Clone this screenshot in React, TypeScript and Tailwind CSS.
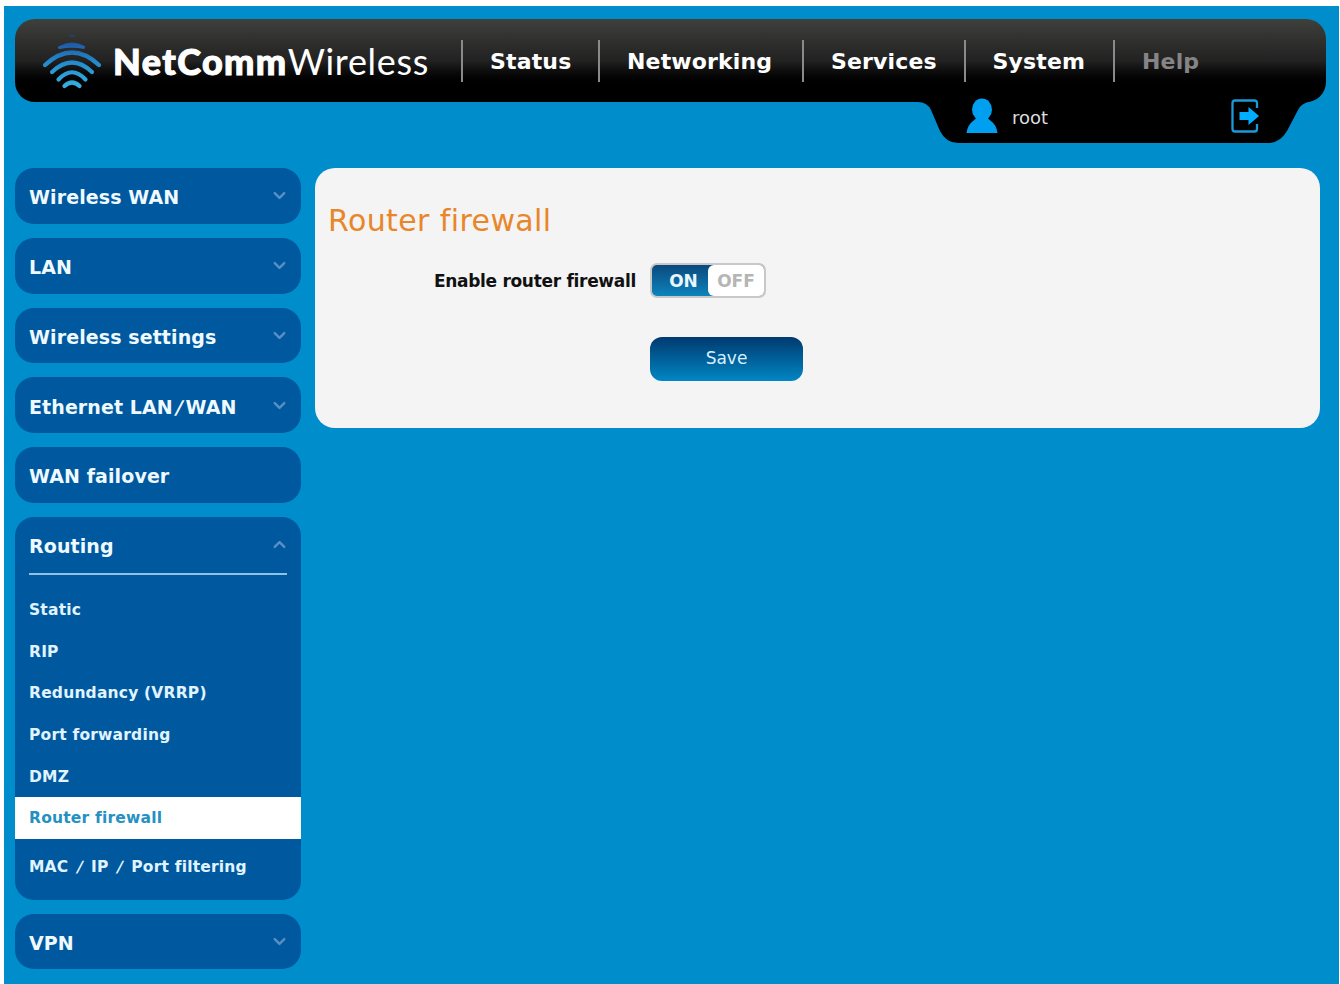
import { useState } from 'react';
import { ChevronDown, ChevronUp } from 'lucide-react';

const topNav = [
  { label: 'Status', width: 'w-[137px]' },
  { label: 'Networking', width: 'w-[204px]' },
  { label: 'Services', width: 'w-[161.5px]' },
  { label: 'System', width: 'w-[149.5px]' },
  { label: 'Help', width: 'w-[130px]', muted: true },
];

const menu = [
  { label: 'Wireless WAN', items: [''] },
  { label: 'LAN', items: [''] },
  { label: 'Wireless settings', items: [''] },
  { label: 'Ethernet LAN/WAN', items: [''] },
  { label: 'WAN failover', items: [] },
  {
    label: 'Routing',
    items: ['Static', 'RIP', 'Redundancy (VRRP)', 'Port forwarding', 'DMZ', 'Router firewall', 'MAC / IP / Port filtering'],
  },
  { label: 'VPN', items: [''] },
];

// slashes are drawn wider and lighter than the words around them
function MenuText({ text }: { text: string }) {
  return (
    <span className="whitespace-pre">
      {text.split(/(\/)/).map((part, i) => (part === '/' ? <span key={i} className="mx-[2.8px] inline-block -skew-x-12">/</span> : part))}
    </span>
  );
}

function LogoMark() {
  return (
    <svg width="60" height="58" viewBox="0 0 60 58" fill="none" strokeWidth="4.2" strokeLinecap="round" className="shrink-0">
      <defs>
        <linearGradient id="mark" x1="0" y1="0" x2="0" y2="58" gradientUnits="userSpaceOnUse">
          <stop offset="0" stopColor="#1d3f78" />
          <stop offset="0.25" stopColor="#2160ac" />
          <stop offset="0.5" stopColor="#2389cb" />
          <stop offset="1" stopColor="#38b4e4" />
        </linearGradient>
      </defs>
      <g stroke="url(#mark)">
        <path d="M28.500 4Q30 2.500 31.500 4" strokeWidth="2.500" opacity="0.5" />
        <path d="M17.500 15.500Q30 8.500 42.500 15.500Q30 13 17.500 15.500" strokeWidth="3" fill="#2160ac" />
        <path d="M3 33Q30 8 57 33" />
        <path d="M10 40Q30 21 50 40" />
        <path d="M16.500 47.500Q30 33 43.500 47.500" />
        <path d="M22.500 54Q30 47 37.500 54" />
      </g>
    </svg>
  );
}

function Header() {
  return (
    <header className="relative h-[83px] rounded-[20px] bg-linear-to-b from-[#3f3f3c] via-[#222] via-50% to-black to-85%">
      <div className="flex h-full items-center">
        <div className="flex w-[446px] items-center pl-[27px]">
          <LogoMark />
          <div className="ml-[11px] whitespace-nowrap font-['Lato',sans-serif] text-[36px] leading-none text-white">
            <span className="font-black tracking-[1.4px] [-webkit-text-stroke:1px_white]">NetComm</span>
            <span className="font-normal tracking-[0.7px]">Wireless</span>
          </div>
        </div>
        <nav className="flex">
          {topNav.map(n => (
            <a key={n.label} href="#" className={`${n.width} flex h-[42px] items-center border-l-2 border-[#8a8a8a] pl-[27px] pt-[2px] text-[22px] font-bold tracking-[0.15px] ${n.muted ? 'text-[#858585]' : 'text-white'}`}>
              {n.label}
            </a>
          ))}
        </nav>
      </div>
      {/* user tab hanging under the bar */}
      <div className="absolute right-[16px] top-[82px] h-[43px] w-[392px]">
        <svg width="392" height="43" viewBox="0 0 392 43" className="absolute inset-0">
          <path d="M0 0H396Q384 1 380 9L369 30Q362 42 350 42H40Q28 42 22 30L13 9Q9 1 0 1Z" fill="#000" />
        </svg>
        <div className="relative flex h-[32px] items-center pl-[48px] text-[18px] text-[#ddd]">
          <svg width="32" height="36" viewBox="0 0 32 36" className="-mt-[3px]" fill="#009ff0">
            <ellipse cx="16" cy="11.500" rx="10" ry="11" />
            <path d="M11 18h10q.5 2.500 4 5q5.500 4 6.500 12h-31q1-8 6.500-12q3.500-2.500 4-5z" />
          </svg>
          <span className="ml-[14px]">root</span>
          <svg width="28" height="34" viewBox="0 0 28 34" className="-mt-[2px] ml-[183px]" fill="none" stroke="#1a9ad8" strokeWidth="2.300">
            <path d="M26 9V4q0-2.500-2.500-2.500H4q-2.500 0-2.500 2.500v26q0 2.500 2.500 2.500h19.500q2.500 0 2.500-2.500v-5" />
            <path d="M8.500 13h9V8l10.500 9l-10.500 9v-5h-9z" fill="#00aeff" stroke="none" />
          </svg>
        </div>
      </div>
    </header>
  );
}

function Sidebar() {
  const [open, setOpen] = useState('Routing');
  const active = 'Router firewall';

  return (
    <aside className="flex w-[286px] flex-col gap-[14px]">
      {menu.map(m => {
        const expanded = open === m.label && m.items.length > 1;
        const Chevron = expanded ? ChevronUp : ChevronDown;
        return (
          <div key={m.label} className="rounded-[19px] bg-[#00589f]">
            <button onClick={() => setOpen(m.label)} className="flex h-[55.8px] w-full items-center justify-between px-[14px] pt-[3px] text-[19px] font-bold tracking-[0.1px] text-[#eefaff]">
              <MenuText text={m.label} />
              {m.items.length > 0 && <Chevron size={19} strokeWidth={3} className="-mt-[3px] mr-[-2px] text-[#5a8fc4]" />}
            </button>
            {expanded && (
              <ul className="pb-[12px] text-[15.5px] font-bold tracking-[0.2px] text-[#e0f4ff]">
                <li className="mx-[14px] mb-[14px] h-[2px] bg-[#8fc0e6]" />
                {m.items.map(item => (
                  <li key={item} className={`flex h-[41.7px] items-center px-[14px] pt-[2px] ${item === active ? 'mb-[7px] bg-white text-[#2591c2]' : ''}`}>
                    <MenuText text={item} />
                  </li>
                ))}
              </ul>
            )}
          </div>
        );
      })}
    </aside>
  );
}

export default function App() {
  const [enabled, setEnabled] = useState(true);

  return (
    <div className="h-[984px] overflow-hidden bg-white pl-[4px] pr-[1px] pt-[6px] font-['DejaVu_Sans',sans-serif]">
      <div className="h-full bg-[#008dcb] pl-[11px] pr-[13px] pt-[13px]">
        <Header />
        <div className="mt-[66px] flex items-start gap-[14px]">
          <Sidebar />
          <main className="mr-[6px] h-[260px] flex-1 rounded-[20px] bg-[#f4f4f4] pl-[13px] pt-[34px]">
            <h1 className="text-[30px] leading-[38px] tracking-[0.4px] text-[#e8862a]">Router firewall</h1>
            <div className="mt-[23px] flex items-center">
              <label className="w-[308px] whitespace-nowrap pt-[2px] text-right text-[17px] font-bold tracking-[-0.3px] text-[#111]">Enable router firewall</label>
              <button onClick={() => setEnabled(!enabled)} className="ml-[14px] flex h-[35px] w-[116px] overflow-hidden rounded-[7px] border-2 border-[#c8c8c8] bg-linear-to-b from-[#0b4a7d] to-[#0d83bd] text-[17px] font-bold">
                <span className="flex h-full w-[56px] items-center justify-center pl-[7px] pt-[3px] text-[#e6f7ff]">ON</span>
                <span className="flex h-full flex-1 items-center justify-center rounded-l-[6px] bg-white pt-[3px] text-[#b5b5b5]">OFF</span>
              </button>
            </div>
            <button className="ml-[322px] mt-[39px] h-[44px] w-[153px] rounded-[12px] bg-linear-to-b from-[#003a70] to-[#0087c4] text-[17px] text-[#d9efff]">
              Save
            </button>
          </main>
        </div>
      </div>
    </div>
  );
}
